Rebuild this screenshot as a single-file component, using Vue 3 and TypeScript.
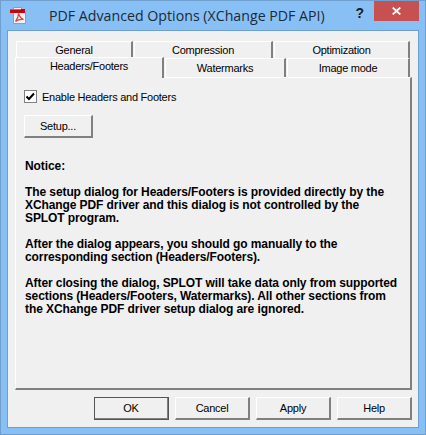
<template>
  <div class="window">
    <div class="titlebar">
      <svg class="app-icon" width="18" height="18" viewBox="0 0 18 18">
        <path d="M4.5 0.5H12.5L16.5 4.5V16.5H4.5Z" fill="#f4f1ee" stroke="#a09a96" />
        <path d="M12.5 0.5V4.5H16.5" fill="#ddd" stroke="#a09a96" />
        <path d="M9.5 6.5C9.5 10 8 12.5 6.5 14.5C9 12.5 11.5 12 14.5 12.5C12 11.5 10.5 9.5 9.5 6.5Z" fill="none" stroke="#d84040" stroke-width="1.2" />
        <rect x="1" y="2" width="15" height="4" fill="#c80010" />
        <rect x="1" y="2" width="11" height="1" fill="#f05050" />
      </svg>
      <span class="title">PDF Advanced Options (XChange PDF API)</span>
      <span class="help-mark">?</span>
      <div class="close">
        <svg width="9" height="8" viewBox="0 0 9 8">
          <path d="M0.7 0.5L8.3 7.5M8.3 0.5L0.7 7.5" stroke="#fff" stroke-width="1.8" fill="none" />
        </svg>
      </div>
    </div>

    <div class="client">
      <div class="tabs">
        <div class="tab-row top">
          <div v-for="t in topTabs" :key="t.label" class="tab" :style="{ width: t.width + 'px' }">{{ t.label }}</div>
        </div>
        <div class="tab-row bottom">
          <div
            v-for="t in bottomTabs"
            :key="t.label"
            class="tab"
            :class="{ active: t.active }"
            :style="{ width: t.width + 'px' }"
          >{{ t.label }}</div>
        </div>
      </div>

      <div class="panel">
        <label class="check-row">
          <span class="checkbox">
            <svg width="9" height="9" viewBox="0 0 9 9">
              <path d="M0.5 4.5L3 7L8 1.5" stroke="#000" stroke-width="2" fill="none" />
            </svg>
          </span>
          Enable Headers and Footers
        </label>
        <button class="btn setup">Setup...</button>
        <div class="notice">
          <p>Notice:</p>
          <p>The setup dialog for Headers/Footers is provided directly by the<br />XChange PDF driver and this dialog is not controlled by the<br />SPLOT program.</p>
          <p>After the dialog appears, you should go manually to the<br />corresponding section (Headers/Footers).</p>
          <p>After closing the dialog, SPLOT will take data only from supported<br />sections (Headers/Footers, Watermarks). All other sections from<br />the XChange PDF driver setup dialog are ignored.</p>
        </div>
      </div>

      <div class="footer">
        <button class="btn default">OK</button>
        <button class="btn">Cancel</button>
        <button class="btn">Apply</button>
        <button class="btn">Help</button>
      </div>
    </div>
  </div>
</template>

<script setup lang="ts">
// tab widths read off the screenshot, rows are not the same
const topTabs = [
  { label: 'General', width: 117 },
  { label: 'Compression', width: 139 },
  { label: 'Optimization', width: 136 },
];
const bottomTabs = [
  { label: 'Headers/Footers', width: 149, active: true },
  { label: 'Watermarks', width: 121, active: false },
  { label: 'Image mode', width: 123, active: false },
];
</script>

<style>
html, body {
  margin: 0;
  background: #88c0f5;
}
</style>

<style scoped>
.window {
  width: 426px;
  height: 435px;
  box-sizing: border-box;
  background: #88c0f5;
  border: 1px solid #6f9fce;
  display: flex;
  flex-direction: column;
  font-family: "Liberation Sans", Arial, sans-serif;
  font-size: 11px;
  letter-spacing: -0.25px;
  color: #000;
  overflow: hidden;
}
.titlebar {
  height: 29px;
  flex: none;
  display: flex;
  align-items: flex-start;
  padding-left: 8px;
}
.app-icon {
  margin-top: 6px;
  flex: none;
}
.title {
  margin-left: 22px;
  margin-top: 4px;
  font-family: "Open Sans", sans-serif;
  font-size: 14.2px;
  letter-spacing: 0;
  line-height: 22px;
  color: #1c2a36;
  white-space: nowrap;
}
.help-mark {
  margin-left: auto;
  margin-top: 3px;
  font-weight: bold;
  font-size: 14px;
  letter-spacing: 0;
  line-height: 18px;
  color: #1a1a1a;
}
.close {
  width: 45px;
  height: 20px;
  margin-left: 10px;
  margin-right: 6px;
  background: #c75050;
  display: flex;
  align-items: center;
  justify-content: center;
}
.client {
  width: 412px;
  height: 398px;
  margin-left: 6px;
  box-sizing: border-box;
  background: #f0f0f0;
  border: 1px solid #6f9fce;
  padding: 10px 0 0 7px;
  display: flex;
  flex-direction: column;
}
.tab-row {
  display: flex;
}
.tab-row.top {
  height: 17px;
  padding-left: 1px;
}
.tab-row.bottom {
  height: 19px;
  align-items: flex-end;
}
.tab {
  box-sizing: border-box;
  text-align: center;
  background: #f0f0f0;
  border-top: 1px solid #fff;
  border-left: 1px solid #fff;
  border-right: 2px solid #808080;
  white-space: nowrap;
}
.tab + .tab {
  margin-left: 1px;
}
.tab-row.top .tab {
  height: 17px;
  line-height: 17px;
}
.tab-row.bottom .tab {
  height: 19px;
  line-height: 18px;
}
.tab-row.bottom .tab.active {
  position: relative;
  z-index: 1;
  height: 21px;
  margin-bottom: -1px;
  line-height: 16px;
  padding-bottom: 4px;
}
.panel {
  height: 313px;
  width: 397px;
  box-sizing: border-box;
  border-top: 1px solid #fff;
  border-left: 1px solid #fff;
  border-right: 2px solid #808080;
  border-bottom: 2px solid #808080;
  padding: 11px 0 0 8px;
}
.check-row {
  display: flex;
  align-items: center;
  height: 15px;
  gap: 5px;
  white-space: nowrap;
}
.checkbox {
  width: 11px;
  height: 11px;
  background: #fff;
  border: 1px solid #808080;
  display: flex;
  align-items: center;
  justify-content: center;
}
.btn {
  width: 75px;
  height: 23px;
  padding: 0;
  box-sizing: border-box;
  background: #f0f0f0;
  font: inherit;
  letter-spacing: inherit;
  color: #000;
  border-style: solid;
  border-width: 1px 2px 2px 1px;
  border-color: #fff #808080 #808080 #fff;
}
.btn.default {
  outline: 1px solid #555;
  outline-offset: -1px;
}
.setup {
  display: block;
  width: 69px;
  margin-top: 11px;
}
.notice {
  margin: 22px 0 0 1px;
  font-size: 12px;
  font-weight: bold;
  letter-spacing: -0.09px;
  line-height: 13px;
  white-space: nowrap;
}
.notice p {
  margin: 0 0 13px;
}
.footer {
  display: flex;
  gap: 6px;
  justify-content: flex-end;
  width: 397px;
  margin-top: 7px;
}
</style>
